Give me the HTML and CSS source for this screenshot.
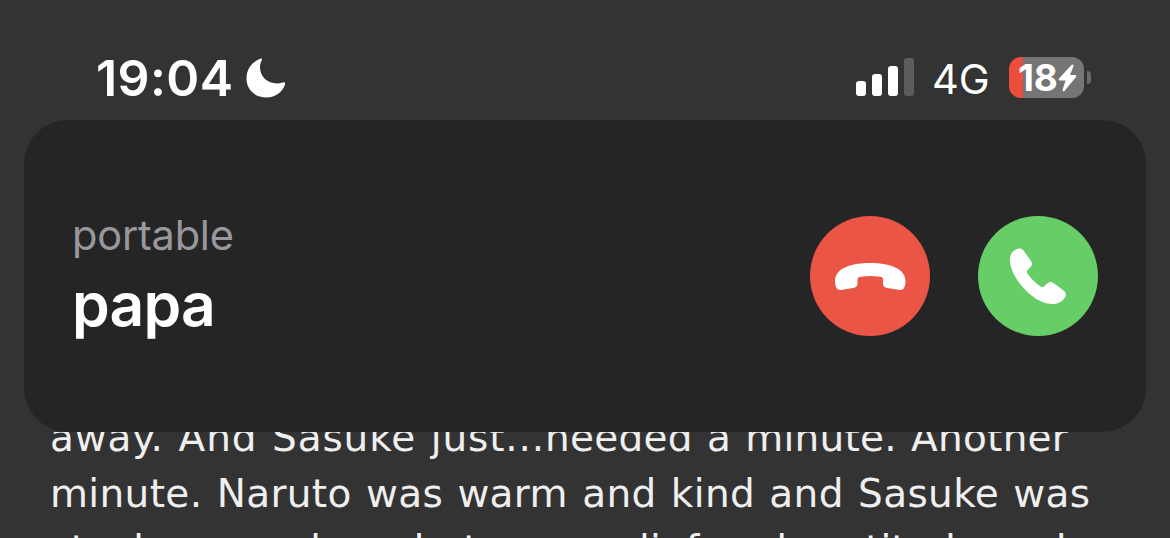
FILE: index.html
```
<!DOCTYPE html>
<html lang="en">

<head>
    <meta charset="UTF-8">
    <meta name="viewport" content="width=device-width, initial-scale=1.0">
    <title>Incoming call</title>
    <link rel="stylesheet" href="styles.css">
</head>

<body>
    <header class="status-bar">
        <span class="time">19:04</span>
        <svg class="moon" viewBox="0 0 40 40">
            <path d="M15.5 0.5C13 1 0.5 6 0.5 20.500C0.500 31.500 9 39.500 20.500 39.500C29.500 39.500 36.500 34 39 26.500C39.500 25 38.500 24 37 24.500C25 28 14 21 14 9C14 6 14.800 4.200 15.700 2.200C16.200 1 16 0.500 15.500 0.500Z" />
        </svg>
        <svg class="signal" viewBox="0 0 58 38">
            <rect x="0" y="23" width="10" height="15" rx="3" />
            <rect x="16" y="16" width="10" height="22" rx="3" />
            <rect x="32" y="8" width="10" height="30" rx="3" />
            <rect class="off" x="48" y="0" width="10" height="38" rx="3" />
        </svg>
        <span class="network">4G</span>
        <div class="battery">
            <span class="level">18</span>
            <svg class="bolt" viewBox="0 0 19 28">
                <path d="M13.500 1L1 14.500Q0 16.500 2 16.500H7.500L4.500 26Q4.500 28 6.500 27L18 13Q19 11 17 11H12L15.500 2Q15.500 -0.500 13.500 1Z" />
            </svg>
        </div>
        <div class="battery-tip"></div>
    </header>

    <section class="call">
        <div class="caller">
            <span class="label">portable</span>
            <span class="name">papa</span>
        </div>
        <button class="btn decline" aria-label="Decline">
            <svg viewBox="0 0 120 120">
                <path d="M60 47C42 47 25 52 25 65C25 70 26.500 74.500 31 74L43 72C47 71.300 47.500 70 47.500 66V63.500C47.500 61.500 49 61 51 60.700Q60 59.500 70 60.700C72 61 73 61.500 73 63.500V66C73 70 73.500 71.300 77.500 72L90 74C94 74.500 95.500 70 95.500 65C95.500 52 78 47 60 47Z" />
            </svg>
        </button>
        <button class="btn accept" aria-label="Accept">
            <svg viewBox="0 0 120 120">
                <path d="M38 33.500C34 35.500 31.500 39 32 45C32.500 55 40 67 49.500 76C58 84 67 88.500 76 88C82 87.500 85.500 84 87.500 80.500C88.500 78 87.500 76 85.500 74.500L75.500 67C73 65.500 71 65.800 69 67.800L66 70.500C65 71.500 63.500 71.500 62.500 70.500Q54 64.500 49.500 57.500C48.500 56 48.500 55 49.500 54L52.500 51C54.500 49 54.500 47 53 45L45.500 34.500C43.500 32 41 32 38 33.500Z" />
            </svg>
        </button>
    </section>

    <main class="story">
        <p><span class="wide">away. And Sasuke just...</span>needed a minute. Another</p>
        <p>minute. Naruto was warm and kind and Sasuke was</p>
        <p>stuck somewhere between relief <span class="tight">and gratitude and</span></p>
    </main>
</body>

</html>
```
FILE: styles.css
```
html,
body {
    margin: 0;
}

body {
    height: 538px;
    overflow: hidden;
    background-color: #333333;
    color: white;
    font-family: Inter, "Liberation Sans", sans-serif;
}

.status-bar {
    display: flex;
    align-items: center;
    box-sizing: border-box;
    height: 120px;
    padding: 35px 79px 0 96px;
}

.time {
    width: 136px;
    font-size: 50px;
    font-weight: 600;
    letter-spacing: 0.4px;
    white-space: nowrap;
}

.moon {
    width: 40px;
    height: 40px;
    margin-left: 14px;
    fill: white;
}

.signal {
    width: 58px;
    height: 38px;
    margin: 0 0 1px auto;
    fill: white;
}

.signal .off {
    fill: #5c5c5c;
}

.network {
    width: 58px;
    margin: 3px 0 0 18px;
    font-size: 41.5px;
    letter-spacing: 0;
}

.battery {
    display: flex;
    align-items: center;
    box-sizing: border-box;
    width: 75px;
    height: 41px;
    margin-left: 19px;
    padding-left: 9px;
    border-radius: 12px;
    background: linear-gradient(to right, #eb4e3d 14px, #757575 14px);
}

.level {
    width: 40px;
    font-size: 37px;
    font-weight: 700;
    letter-spacing: -0.3px;
}

.bolt {
    width: 19px;
    height: 28px;
    fill: white;
}

.battery-tip {
    width: 4px;
    height: 13px;
    margin-left: 3px;
    border-radius: 0 5px 5px 0;
    background-color: #6a6a6a;
}

.call {
    display: flex;
    align-items: center;
    box-sizing: border-box;
    width: 1122px;
    height: 312px;
    margin: 0 24px;
    padding: 0 48px;
    border-radius: 44px;
    background-color: #252525;
}

.caller {
    display: flex;
    flex-direction: column;
    margin-right: auto;
    padding-bottom: 4px;
}

.label {
    color: #98979e;
    font-size: 41.5px;
    letter-spacing: -0.2px;
    line-height: 60px;
}

.name {
    font-size: 60.5px;
    font-weight: 600;
    letter-spacing: -0.8px;
    line-height: 78px;
}

.btn {
    width: 120px;
    height: 120px;
    padding: 0;
    border: none;
    border-radius: 50%;
}

.btn svg {
    display: block;
    fill: white;
}

.decline {
    background-color: #eb5545;
}

.accept {
    margin-left: 48px;
    background-color: #67ce67;
}

.story {
    height: 106px;
    overflow: hidden;
    padding-left: 50px;
    color: #efefef;
    font-family: "DejaVu Sans", Verdana, sans-serif;
    font-size: 39px;
    line-height: 56px;
    letter-spacing: 0.35px;
    word-spacing: 1.5px;
    white-space: nowrap;
}

.story p {
    margin: 0;
}

.story p:first-child {
    margin-top: -22px;
    letter-spacing: 0.25px;
}

.story .wide {
    letter-spacing: 0.85px;
}

.story .tight {
    letter-spacing: -0.1px;
}
```
